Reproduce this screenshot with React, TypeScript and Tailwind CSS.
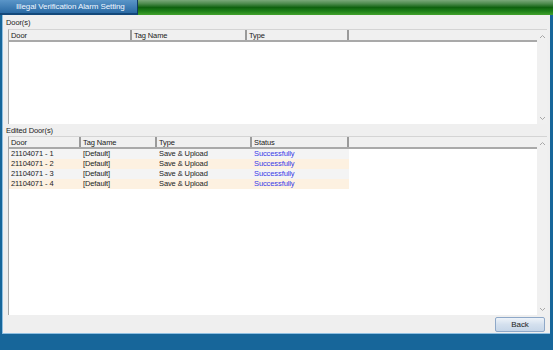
import React from 'react';

type Col = { label: string; w: string };

const doorCols: Col[] = [
  { label: 'Door', w: 'w-[123px]' },
  { label: 'Tag Name', w: 'w-[115px]' },
  { label: 'Type', w: 'w-[102px]' },
];

const editedCols: Col[] = [
  { label: 'Door', w: 'w-[72px]' },
  { label: 'Tag Name', w: 'w-[76px]' },
  { label: 'Type', w: 'w-[95px]' },
  { label: 'Status', w: 'w-[97px]' },
];

const edited = [1, 2, 3, 4].map((n) => ({
  door: `21104071 - ${n}`,
  tag: '[Default]',
  type: 'Save & Upload',
  status: 'Successfully',
}));

function Chevron({ up }: { up?: boolean }) {
  return (
    <svg width="7" height="5" viewBox="0 0 7 5" className="block">
      <path
        d={up ? 'M1 4 L3.5 1.5 L6 4' : 'M1 1 L3.5 3.5 L6 1'}
        fill="none"
        stroke="#a8a8a8"
        strokeWidth="1"
      />
    </svg>
  );
}

function ListBox({ cols, height, children }: { cols: Col[]; height: string; children?: React.ReactNode }) {
  return (
    <div className={`flex ${height} bg-white border-t border-t-[#d4d4d4] border-l border-l-[#a8a8a8]`}>
      <div className="flex-1 flex flex-col min-w-0">
        <div className="flex h-[12px] bg-[#f0f0f0] border-b-2 border-[#a9a9a9]">
          {cols.map((c) => (
            <div key={c.label} className={`${c.w} shrink-0 border-r-2 border-[#9a9a9a] pl-[2px] leading-[11px] text-[#1a1a1a]`}>
              {c.label}
            </div>
          ))}
          <div className="flex-1" />
        </div>
        {children}
      </div>
      <div className="w-[10px] bg-[#f0f0f0] flex flex-col items-center justify-between pt-[4px] pb-[3px]">
        <Chevron up />
        <Chevron />
      </div>
    </div>
  );
}

export default function App() {
  return (
    <div className="w-[553px] h-[350px] flex flex-col bg-[#17669a] font-['Liberation_Sans',Arial,sans-serif] text-[7.5px] tracking-[-0.1px] overflow-hidden">
      <div className="flex h-[15px]">
        <div className="w-[138px] border-b-2 border-[#13487a] border-r border-r-[#0e3a64] bg-[linear-gradient(to_bottom,#5a95c8,#2a6aa4)] text-[#f0f6ff] leading-[13px] pl-[16px] text-[8px]">
          Illegal Verification Alarm Setting
        </div>
        <div className="flex-1 bg-[linear-gradient(to_bottom,#7aa87a_0%,#4c8a4c_25%,#0f620f_50%,#1f821a_75%,#42a22c_100%)]" />
      </div>
      <div className="flex-1 flex pl-[2px] pr-[3px]">
        <div className="flex-1 flex flex-col bg-[#efefef] border-l border-[#8fc0e2] border-b pl-[5px] pr-[3px] pt-[3px] pb-[1px]">
          <div className="h-[11px] leading-[10px] -ml-[2px] text-[#222]">Door(s)</div>
          <ListBox cols={doorCols} height="h-[95px]" />
          <div className="h-[12px] leading-[11px] pt-[1px] -ml-[2px] text-[#222]">Edited Door(s)</div>
          <ListBox cols={editedCols} height="h-[179px]">
            <div className="flex flex-col">
              {edited.map((r, i) => (
                <div key={r.door} className={`flex h-[10px] leading-[10px] w-[340px] ${i % 2 ? 'bg-[#fdf1e1]' : 'bg-[#f4f4f4]'}`}>
                  <div className="w-[72px] pl-[2px] text-[#222]">{r.door}</div>
                  <div className="w-[76px] pl-[2px] text-[#222]">{r.tag}</div>
                  <div className="w-[95px] pl-[2px] text-[#222]">{r.type}</div>
                  <div className="w-[97px] pl-[2px] text-[#3a3ae8]">{r.status}</div>
                </div>
              ))}
            </div>
          </ListBox>
          <div className="flex justify-end mt-[2px] h-[15px] pr-[2px]">
            <button className="w-[50px] h-[15px] border border-[#8ea8c8] rounded-[2px] bg-[linear-gradient(to_bottom,#eef3f9,#d4e0ee_50%,#c6d6e8)] text-[#222] leading-[13px] text-[8px]">
              Back
            </button>
          </div>
        </div>
      </div>
      <div className="h-[16px]" />
    </div>
  );
}
